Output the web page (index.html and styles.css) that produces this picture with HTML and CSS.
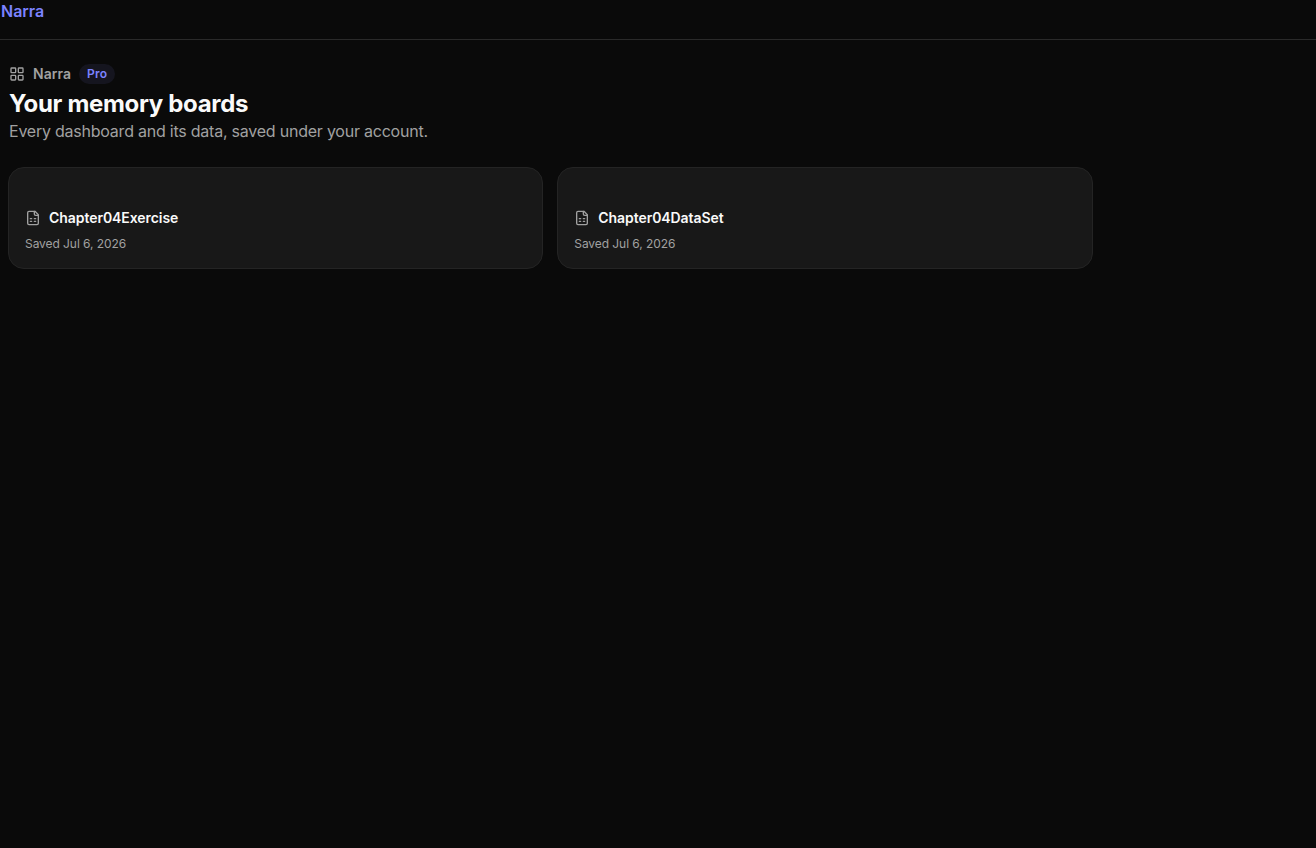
FILE: index.html
```
<!DOCTYPE html>
<html lang="en">
<head>
    <meta charset="UTF-8">
    <meta name="viewport" content="width=device-width, initial-scale=1.0">
    <title>Narra</title>
    <link rel="stylesheet" href="styles.css">
</head>
<body>
    <header class="topbar">
        <a class="brand">Narra</a>
    </header>
    <main class="page">
        <div class="crumb">
            <svg class="icon" viewBox="0 0 24 24">
                <rect x="3" y="3" width="7" height="7" rx="1"/>
                <rect x="14" y="3" width="7" height="7" rx="1"/>
                <rect x="14" y="14" width="7" height="7" rx="1"/>
                <rect x="3" y="14" width="7" height="7" rx="1"/>
            </svg>
            <span class="crumb-name">Narra</span>
            <span class="badge">Pro</span>
        </div>
        <h1>Your memory boards</h1>
        <p class="subtitle">Every dashboard and its data, saved under your account.</p>

        <div class="boards">
            <div class="card">
                <div class="card-head">
                    <svg class="icon" viewBox="0 0 24 24">
                        <path d="M15 2H6a2 2 0 0 0-2 2v16a2 2 0 0 0 2 2h12a2 2 0 0 0 2-2V7Z"/>
                        <path d="M14 2v4a2 2 0 0 0 2 2h4"/>
                        <path d="M8 13h2M14 13h2M8 17h2M14 17h2"/>
                    </svg>
                    <span class="card-name">Chapter04Exercise</span>
                </div>
                <div class="card-date">Saved Jul 6, 2026</div>
            </div>
            <div class="card">
                <div class="card-head">
                    <svg class="icon" viewBox="0 0 24 24">
                        <path d="M15 2H6a2 2 0 0 0-2 2v16a2 2 0 0 0 2 2h12a2 2 0 0 0 2-2V7Z"/>
                        <path d="M14 2v4a2 2 0 0 0 2 2h4"/>
                        <path d="M8 13h2M14 13h2M8 17h2M14 17h2"/>
                    </svg>
                    <span class="card-name">Chapter04DataSet</span>
                </div>
                <div class="card-date">Saved Jul 6, 2026</div>
            </div>
        </div>
    </main>
</body>
</html>
```

FILE: styles.css
```
*{
    box-sizing: border-box;
}
body{
    margin: 0;
    min-height: 100vh;
    background-color: #0a0a0a;
    color: #fafafa;
    font-family: Inter, "Liberation Sans", sans-serif;
}
.topbar{
    height: 40px;
    padding-left: 1px;
    border-bottom: 1px solid #2a2a2a;
}
.brand{
    display: block;
    color: #7c83ff;
    font-size: 16px;
    font-weight: 600;
    line-height: 22px;
}
.page{
    width: 1100.5px;
    padding: 24px 8px;
}
.icon{
    width: 16px;
    height: 16px;
    flex: none;
    fill: none;
    stroke: #a1a1a1;
    stroke-width: 2;
    stroke-linecap: round;
    stroke-linejoin: round;
}
.crumb{
    display: flex;
    align-items: center;
    height: 20px;
    padding-left: 1px;
    color: #a1a1a1;
}
.crumb-name{
    margin-left: 8px;
    padding-bottom: 2px;
    font-size: 14px;
    font-weight: 600;
    letter-spacing: 0.05px;
}
.badge{
    margin-left: 8px;
    padding: 0 8px;
    border-radius: 10px;
    background-color: #15151f;
    color: #7c83ff;
    font-size: 12px;
    font-weight: 600;
    line-height: 20px;
    letter-spacing: 0.15px;
}
h1{
    margin: 4px 0 0 1px;
    font-size: 24px;
    font-weight: 700;
    line-height: 32px;
    letter-spacing: -0.32px;
}
.subtitle{
    margin: 0 0 0 1px;
    color: #a1a1a1;
    font-size: 16px;
    line-height: 22px;
    letter-spacing: -0.23px;
}
.boards{
    display: grid;
    grid-template-columns: 1fr 1fr;
    gap: 14px;
    margin-top: 25px;
}
.card{
    height: 102px;
    padding: 39px 16px 0;
    border: 1px solid #242424;
    border-radius: 16px;
    background-color: #181818;
}
.card-head{
    display: flex;
    align-items: center;
    gap: 8px;
    height: 22px;
}
.card-name{
    padding-bottom: 2px;
    font-size: 14px;
    font-weight: 600;
    letter-spacing: -0.06px;
}
.card-date{
    margin-top: 6px;
    color: #a1a1a1;
    font-size: 12px;
    line-height: 18px;
    letter-spacing: -0.07px;
}
```
